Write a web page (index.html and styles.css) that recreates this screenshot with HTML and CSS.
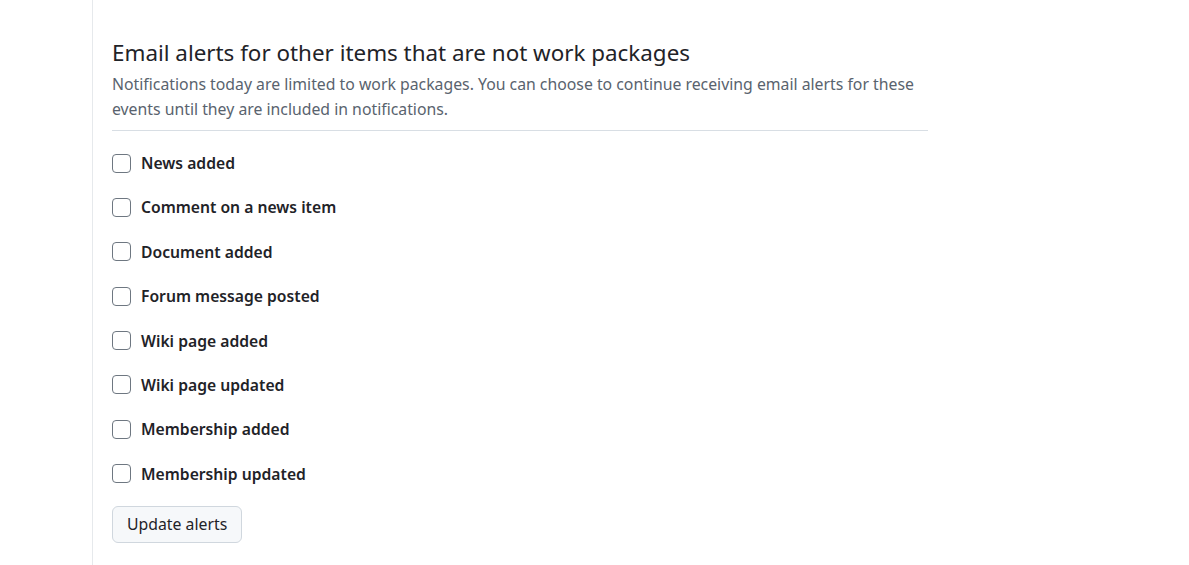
FILE: index.html
```html
<!DOCTYPE html>
<html>
<head>
<meta charset="utf-8">
<link rel="stylesheet" href="styles.css">
</head>
<body>
<div class="page">
  <div class="sidebar"></div>
  <main class="main">
    <section class="section">
      <h2 class="title">Email alerts for other items that are not work packages</h2>
      <p class="desc">Notifications today are limited to work packages. You can choose to continue receiving email alerts for these events until they are included in notifications.</p>
      <div class="list">
        <label class="row"><input type="checkbox" class="box"><span>News added</span></label>
        <label class="row"><input type="checkbox" class="box"><span>Comment on a news item</span></label>
        <label class="row"><input type="checkbox" class="box"><span>Document added</span></label>
        <label class="row"><input type="checkbox" class="box"><span>Forum message posted</span></label>
        <label class="row"><input type="checkbox" class="box"><span>Wiki page added</span></label>
        <label class="row"><input type="checkbox" class="box"><span>Wiki page updated</span></label>
        <label class="row"><input type="checkbox" class="box"><span>Membership added</span></label>
        <label class="row"><input type="checkbox" class="box"><span>Membership updated</span></label>
      </div>
      <button class="btn" type="button">Update alerts</button>
    </section>
  </main>
</div>
</body>
</html>
```
FILE: styles.css
```css
html, body {
  margin: 0;
  padding: 0;
  background: #ffffff;
}
body {
  font-family: "Noto Sans", "Open Sans", sans-serif;
  color: #1f2328;
}
.page {
  display: flex;
  min-height: 565px;
}
.sidebar {
  width: 92px;
  flex: none;
  border-right: 1px solid #e6e9ec;
}
.main {
  flex: 1;
  padding: 38px 0 0 19px;
}
.section {
  width: 816px;
}
.title {
  margin: 0 0 4px;
  font-size: 22.4px;
  font-weight: 400;
  line-height: 30px;
  color: #1f2328;
}
.desc {
  margin: 0;
  padding-bottom: 8px;
  font-size: 15.8px;
  line-height: 25px;
  color: #59636e;
  border-bottom: 1px solid #d8dee4;
}
.list {
  display: flex;
  flex-direction: column;
  gap: 20.4px;
  padding-top: 20px;
}
.row {
  display: flex;
  align-items: center;
  gap: 10px;
  font-size: 15.7px;
  font-weight: 600;
  line-height: 24px;
  height: 24px;
  color: #1f2328;
}
.box {
  appearance: none;
  -webkit-appearance: none;
  margin: 0;
  width: 19px;
  height: 19px;
  border: 1px solid #6e7781;
  border-radius: 4px;
  background: #fff;
  flex: none;
}
.btn {
  margin-top: 20px;
  height: 37px;
  padding: 0 14px;
  font-family: inherit;
  font-size: 15.8px;
  color: #1f2328;
  background: #f6f8fa;
  border: 1px solid #d0d7de;
  border-radius: 6px;
}
```
